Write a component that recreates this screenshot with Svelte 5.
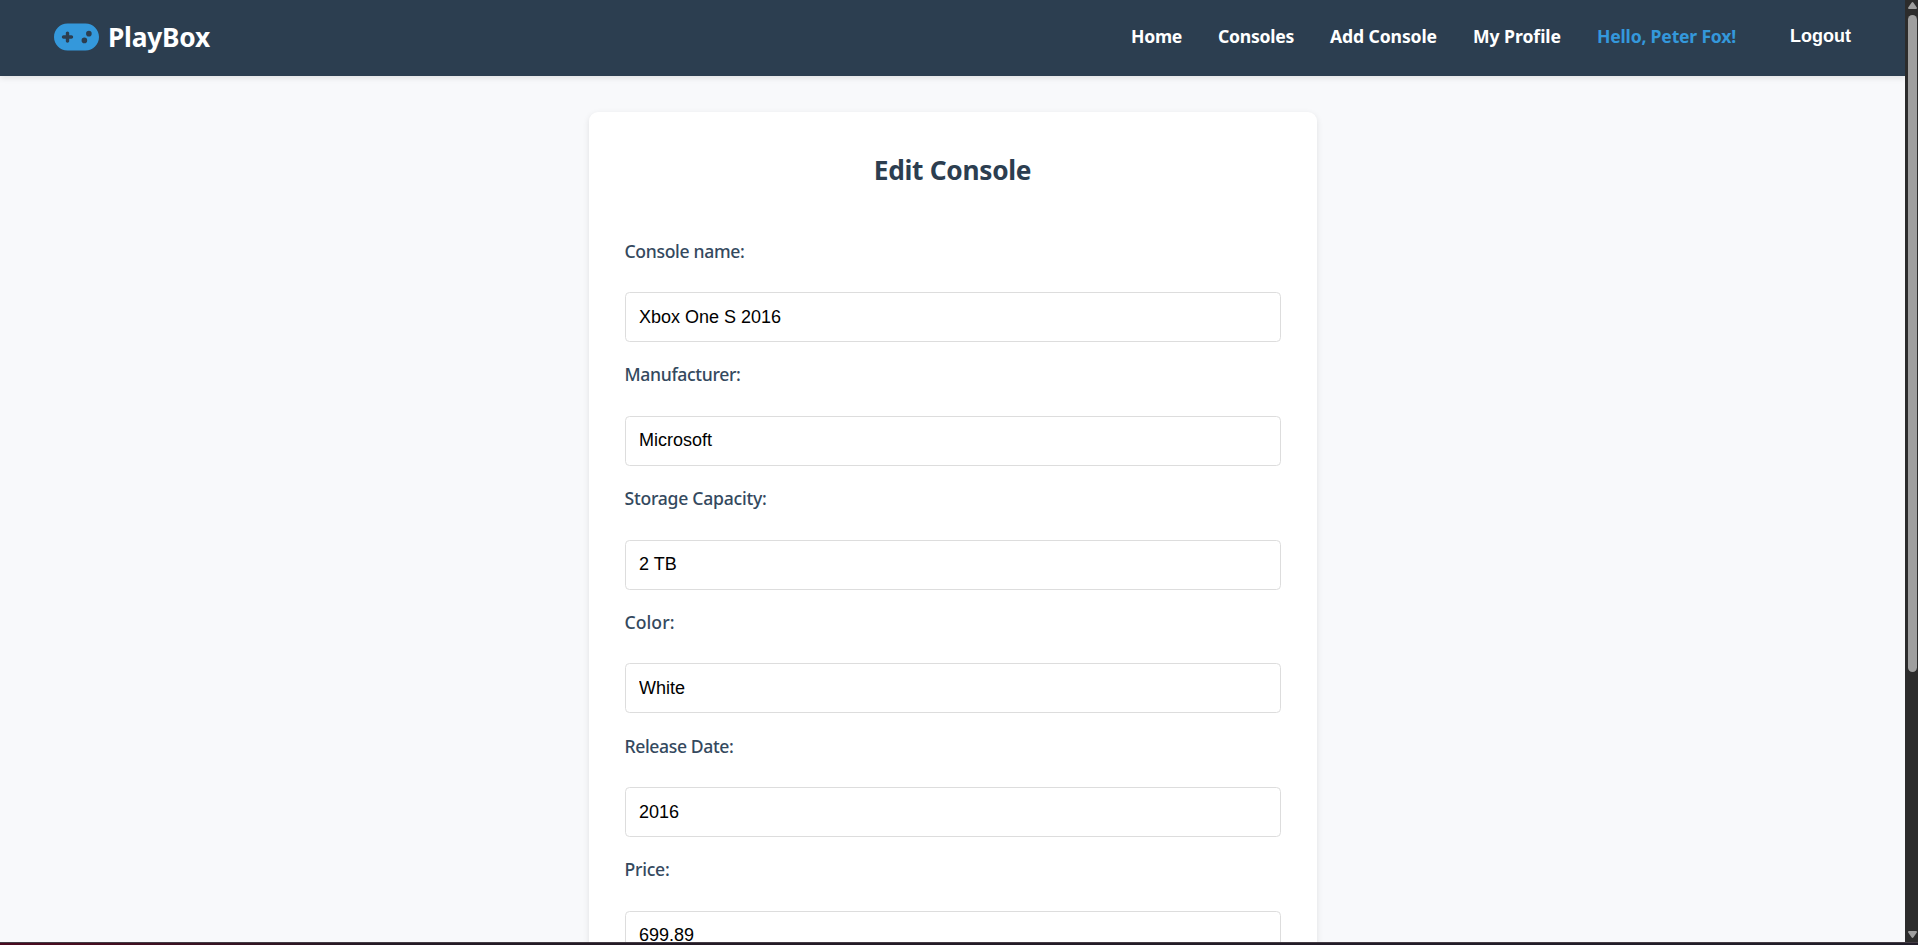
<script>
  const links = [
    { text: 'Home', width: 51 },
    { text: 'Consoles', width: 76 },
    { text: 'Add Console', width: 107 },
    { text: 'My Profile', width: 88 },
    { text: 'Hello, Peter Fox!', width: 139, user: true }
  ];

  const fields = [
    { label: 'Console name:', value: 'Xbox One S 2016', width: 120 },
    { label: 'Manufacturer:', value: 'Microsoft', width: 116 },
    { label: 'Storage Capacity:', value: '2 TB', width: 142 },
    { label: 'Color:', value: 'White', width: 50 },
    { label: 'Release Date:', value: '2016', width: 109 },
    { label: 'Price:', value: '699.89', width: 45 }
  ];

  // Spreads the letters so that the text takes exactly the given width.
  function fit(node, width) {
    const natural = node.getBoundingClientRect().width;
    node.style.letterSpacing = `${(width - natural) / node.textContent.length}px`;
  }
</script>

<div class="window">
  <div class="view">
    <div class="page">
      <header>
        <a class="logo" href="#home">
          <svg viewBox="0 0 640 512" width="45" height="36" aria-hidden="true">
            <path fill="#3498db" d="M192 64C86 64 0 150 0 256S86 448 192 448H448c106 0 192-86 192-192s-86-192-192-192H192zM496 168a40 40 0 1 1 0 80 40 40 0 1 1 0-80zM392 304a40 40 0 1 1 80 0 40 40 0 1 1 -80 0zM168 200c0-13.300 10.700-24 24-24s24 10.700 24 24v32h32c13.300 0 24 10.700 24 24s-10.700 24-24 24H216v32c0 13.300-10.700 24-24 24s-24-10.700-24-24V280H136c-13.300 0-24-10.700-24-24s10.700-24 24-24h32V200z" />
          </svg>
          <span use:fit={102}>PlayBox</span>
        </a>
        <nav>
          {#each links as link}
            <a href="#nav" class:user={link.user}><span use:fit={link.width}>{link.text}</span></a>
          {/each}
          <button type="button">Logout</button>
        </nav>
      </header>
      <main>
        <form>
          <h2><span use:fit={157.5}>Edit Console</span></h2>
          {#each fields as field, i}
            <label for="field{i}"><span use:fit={field.width}>{field.label}</span></label>
            <input id="field{i}" type="text" value={field.value} />
          {/each}
        </form>
      </main>
    </div>
    <div class="scrollbar">
      <svg width="9" height="7" viewBox="0 0 9 7"><path d="M3.500.8Q4.500-.6 5.500.8L8.800 5.500Q9.300 7 8 7H1Q-.3 7 .2 5.500Z" /></svg>
      <div class="thumb"></div>
      <svg class="down" width="9" height="7" viewBox="0 0 9 7"><path d="M3.500 6.200Q4.500 7.600 5.500 6.200L8.800 1.500Q9.300 0 8 0H1Q-.3 0 .2 1.500Z" /></svg>
    </div>
  </div>
  <div class="edge"></div>
</div>

<style>
  :global(body) {
    margin: 0;
    overflow: hidden;
  }

  .window {
    display: flex;
    flex-direction: column;
    height: 945px;
    overflow: hidden;
    font-family: 'Noto Sans', 'Open Sans', sans-serif;
    font-size: 17.6px;
  }

  .view {
    flex: 1;
    display: flex;
    min-height: 0;
  }

  .page {
    flex: 1;
    overflow: hidden;
    background: #f8f9fb;
  }

  header {
    display: flex;
    justify-content: space-between;
    box-sizing: border-box;
    height: 76px;
    padding: 0 54px;
    background: #2c3e50;
    box-shadow: 0 2px 6px rgba(0, 0, 0, 0.1);
  }

  .logo {
    display: flex;
    align-items: center;
    gap: 9px;
    height: 73px;
    color: #fff;
    font-size: 26.300px;
    font-weight: 700;
    line-height: 36px;
    text-decoration: none;
  }

  .logo svg {
    display: block;
  }

  span {
    white-space: nowrap;
  }

  nav {
    display: flex;
    gap: 36px;
    line-height: 24px;
    padding-top: 24px;
  }

  nav a {
    color: #fff;
    font-weight: 700;
    text-decoration: none;
  }

  nav a.user {
    color: #3498db;
  }

  button {
    height: 22px;
    margin: 1px 0 0 18px;
    padding: 0;
    border: 0;
    background: none;
    color: #fff;
    font: 700 18px/22px 'Liberation Sans', Arial, sans-serif;
  }

  main {
    display: flex;
    justify-content: center;
    padding-top: 36px;
  }

  form {
    box-sizing: border-box;
    width: 728px;
    height: 1100px;
    padding: 36px;
    border-radius: 9px;
    background: #fff;
    box-shadow: 0 2px 6px rgba(0, 0, 0, 0.1);
  }

  h2 {
    margin: 1px 0 0;
    color: #2c3e50;
    font-size: 26.300px;
    font-weight: 700;
    line-height: 43px;
    text-align: center;
  }

  label {
    display: block;
    height: 29px;
    margin-top: 18.300px;
    color: #34495e;
    font-weight: 500;
    line-height: 29px;
  }

  h2 + label {
    margin-top: 44.500px;
  }

  input {
    display: block;
    box-sizing: border-box;
    width: 100%;
    height: 50px;
    margin: 26.500px 0 0;
    padding: 0 13.500px;
    border: 1px solid #ddd;
    border-radius: 4.500px;
    background: #fff;
    color: #000;
    font: 18px 'Liberation Sans', Arial, sans-serif;
  }

  .scrollbar {
    display: flex;
    flex-direction: column;
    align-items: center;
    box-sizing: border-box;
    width: 13px;
    padding: 2px 1px 4px 3px;
    background: #2c2c2c;
  }

  .scrollbar svg {
    flex: none;
    fill: #9f9f9f;
  }

  .scrollbar .down {
    margin-top: auto;
  }

  .thumb {
    width: 9px;
    height: 657px;
    margin-top: 6px;
    border-radius: 5px;
    background: #9f9f9f;
  }

  .edge {
    height: 3px;
    box-sizing: border-box;
    border-top: 1px solid #443c44;
    background: linear-gradient(90deg, #4a0a20 0, #470d20 80px, #241a25 380px, #211d29 100%);
  }
</style>
